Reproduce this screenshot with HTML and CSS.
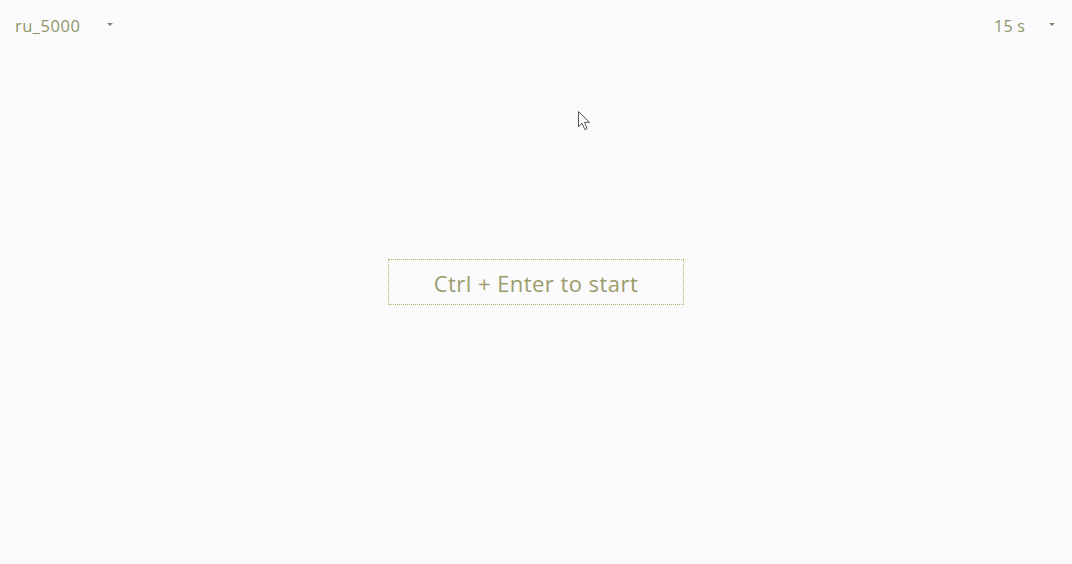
FILE: index.html
```html
<!DOCTYPE html>
<html>
<head>
<meta charset="utf-8">
<link rel="stylesheet" href="styles.css">
</head>
<body>
<div class="app">
  <header class="topbar">
    <div class="select">
      <span class="label wide">ru_5000</span>
      <span class="caret"></span>
    </div>
    <div class="select">
      <span class="label">15 s</span>
      <span class="caret"></span>
    </div>
  </header>
  <main class="stage">
    <button class="start">Ctrl + Enter to start</button>
  </main>
  <svg class="cursor" width="15" height="23" viewBox="0 0 15 23">
    <path d="M1.5 1.5 L1.5 16.5 L5 13.2 L7.8 19.6 L10.1 18.6 L7.5 12.3 L12.5 12.3 Z" fill="#ffffff" stroke="#555555" stroke-width="1" stroke-linejoin="miter"/>
  </svg>
</div>
</body>
</html>
```
FILE: styles.css
```css
html, body {
  margin: 0;
  padding: 0;
  background: #fbfbfd;
  width: 1072px;
  height: 564px;
  overflow: hidden;
  font-family: "Open Sans", "Noto Sans", sans-serif;
}
.app {
  position: relative;
  width: 1072px;
  height: 564px;
  display: flex;
  flex-direction: column;
}
.topbar {
  display: flex;
  justify-content: space-between;
  align-items: center;
  height: 52px;
  padding: 0 17px 0 15px;
  box-sizing: border-box;
}
.select {
  display: flex;
  align-items: center;
  gap: 24px;
}
.label {
  color: #8e9667;
  font-size: 16px;
  line-height: 20px;
  letter-spacing: 0.2px;
}
.label.wide {
  font-size: 16.5px;
  letter-spacing: 0.5px;
  margin-right: 3px;
}
.caret {
  width: 0;
  height: 0;
  border-left: 3px solid transparent;
  border-right: 3px solid transparent;
  border-top: 3px solid #8a8a70;
  margin-top: -4px;
}
.stage {
  flex: 1;
  display: flex;
  justify-content: center;
  padding-top: 207px;
  box-sizing: border-box;
}
.start {
  width: 296px;
  height: 46px;
  box-sizing: border-box;
  border: 1px dotted #b3b06a;
  background: transparent;
  color: #9c9c6a;
  font-family: "Open Sans", "Noto Sans", sans-serif;
  font-size: 22px;
  letter-spacing: 0.45px;
  padding: 3px 0 0 0;
  line-height: 41px;
  cursor: pointer;
}
.cursor {
  position: absolute;
  left: 577px;
  top: 110px;
}
```
